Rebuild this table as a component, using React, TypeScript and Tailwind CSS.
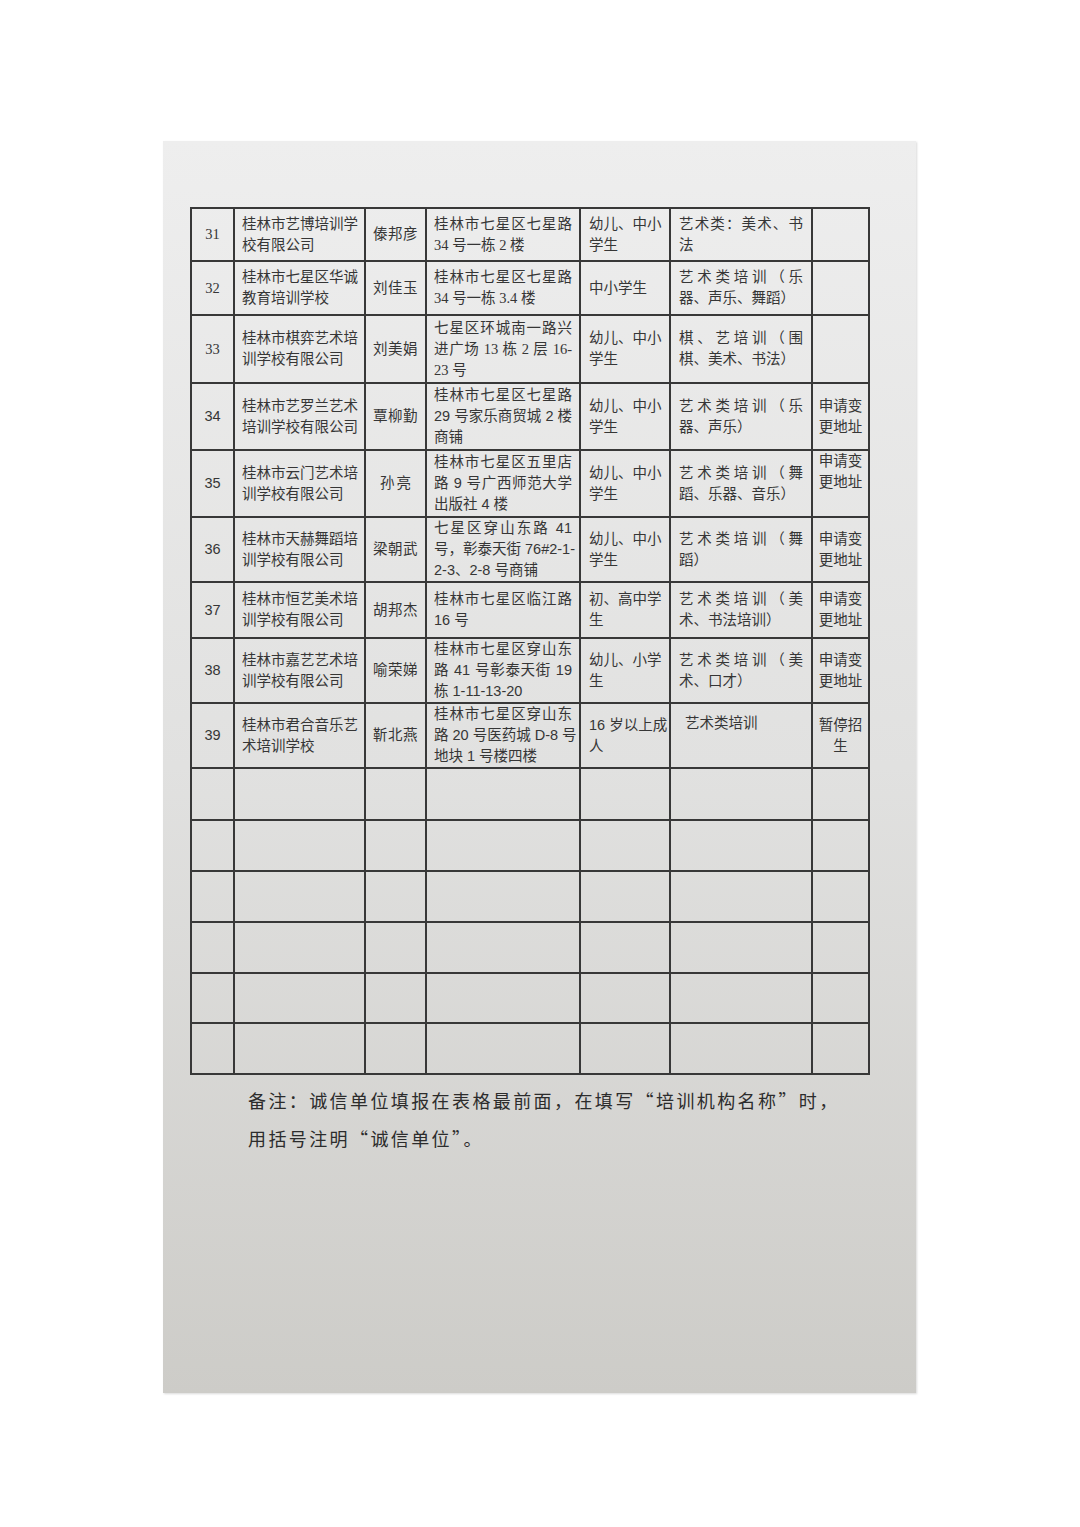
import React from "react";

type Row = {
  n: string;
  name: string[];
  person: string;
  personSpread?: boolean;
  addr: string[];
  obj: string[];
  type: string[];
  note: string[];
  noteTop?: boolean;
  typeTop?: boolean;
  h: string;
  serif?: boolean;
};

const rows: Row[] = [
  { n: "31", name: ["桂林市艺博培训学", "校有限公司"], person: "傣邦彦", addr: ["桂林市七星区七星路", "34 号一栋 2 楼"], obj: ["幼儿、中小", "学生"], type: ["艺术类：美术、书", "法"], note: [], h: "h-[53px]", serif: true },
  { n: "32", name: ["桂林市七星区华诚", "教育培训学校"], person: "刘佳玉", addr: ["桂林市七星区七星路", "34 号一栋 3.4 楼"], obj: ["中小学生"], type: ["艺术类培训（乐", "器、声乐、舞蹈）"], note: [], h: "h-[54px]", serif: true },
  { n: "33", name: ["桂林市棋弈艺术培", "训学校有限公司"], person: "刘美娟", addr: ["七星区环城南一路兴", "进广场 13 栋 2 层 16-", "23 号"], obj: ["幼儿、中小", "学生"], type: ["棋、艺培训（围", "棋、美术、书法）"], note: [], h: "h-[68px]", serif: true },
  { n: "34", name: ["桂林市艺罗兰艺术", "培训学校有限公司"], person: "覃柳勤", addr: ["桂林市七星区七星路", "29 号家乐商贸城 2 楼", "商铺"], obj: ["幼儿、中小", "学生"], type: ["艺术类培训（乐", "器、声乐）"], note: ["申请变", "更地址"], h: "h-[67px]" },
  { n: "35", name: ["桂林市云门艺术培", "训学校有限公司"], person: "孙亮", personSpread: true, addr: ["桂林市七星区五里店", "路 9 号广西师范大学", "出版社 4 楼"], obj: ["幼儿、中小", "学生"], type: ["艺术类培训（舞", "蹈、乐器、音乐）"], note: ["申请变", "更地址"], noteTop: true, h: "h-[67px]" },
  { n: "36", name: ["桂林市天赫舞蹈培", "训学校有限公司"], person: "梁朝武", addr: ["七星区穿山东路 41", "号，彰泰天街 76#2-1-", "2-3、2-8 号商铺"], obj: ["幼儿、中小", "学生"], type: ["艺术类培训（舞", "蹈）"], note: ["申请变", "更地址"], h: "h-[65px]" },
  { n: "37", name: ["桂林市恒艺美术培", "训学校有限公司"], person: "胡邦杰", addr: ["桂林市七星区临江路", "16 号"], obj: ["初、高中学", "生"], type: ["艺术类培训（美", "术、书法培训）"], note: ["申请变", "更地址"], h: "h-[56px]" },
  { n: "38", name: ["桂林市嘉艺艺术培", "训学校有限公司"], person: "喻荣娣", addr: ["桂林市七星区穿山东", "路 41 号彰泰天街 19", "栋 1-11-13-20"], obj: ["幼儿、小学", "生"], type: ["艺术类培训（美", "术、口才）"], note: ["申请变", "更地址"], h: "h-[63px]" },
  { n: "39", name: ["桂林市君合音乐艺", "术培训学校"], person: "靳北燕", addr: ["桂林市七星区穿山东", "路 20 号医药城 D-8 号", "地块 1 号楼四楼"], obj: ["16 岁以上成", "人"], type: ["艺术类培训"], typeTop: true, note: ["暂停招", "生"], h: "h-[65px]" },
];

const emptyHeights = ["h-[52px]", "h-[51px]", "h-[51px]", "h-[51px]", "h-[50px]", "h-[51px]"];

const td = "border-2 border-[#383838] p-0";

function Lines({ lines }: { lines: string[] }) {
  return (
    <>
      {lines.map((l, i) => (
        <div
          key={i}
          className={
            i < lines.length - 1 && lines.length > 1
              ? "text-justify [text-align-last:justify] whitespace-nowrap"
              : "text-left whitespace-nowrap"
          }
        >
          {l}
        </div>
      ))}
    </>
  );
}

export default function App() {
  const sans = "font-['Liberation_Sans','Noto_Sans_CJK_SC',sans-serif]";
  const serif = "font-['Liberation_Serif','Noto_Sans_CJK_SC',serif]";
  return (
    <div lang="zh-CN" className="w-[1080px] h-[1527px] bg-white pt-[141px] pl-[163px] font-['Noto_Sans_CJK_SC',sans-serif]">
      <div className="w-[753px] h-[1252px] bg-linear-to-b from-[#eeeeee] via-[#e1e1e0] to-[#cdccc8] pt-[66px] pl-[27px] shadow-[1px_1px_2px_rgba(0,0,0,0.15)]">
        <table className="table-fixed border-collapse w-[678px] text-[14.5px] leading-[21px] text-[#363636]">
          <colgroup>
            <col className="w-[43px]" />
            <col className="w-[131px]" />
            <col className="w-[61px]" />
            <col className="w-[154px]" />
            <col className="w-[90px]" />
            <col className="w-[142px]" />
            <col className="w-[57px]" />
          </colgroup>
          <tbody>
            {rows.map((r) => (
              <tr key={r.n} className={`${r.h} ${r.serif ? serif : sans}`}>
                <td className={`${td} text-center`}>{r.n}</td>
                <td className={`${td} px-[7px]`}>
                  <Lines lines={r.name} />
                </td>
                <td className={`${td} ${r.personSpread ? "px-[14px]" : "px-[4px] text-center tracking-[0.5px]"}`}>
                  {r.personSpread ? (
                    <div className="flex justify-between">
                      <span>孙</span>
                      <span>亮</span>
                    </div>
                  ) : (
                    r.person
                  )}
                </td>
                <td className={`${td} px-[7px]`}>
                  <Lines lines={r.addr} />
                </td>
                <td className={`${td} px-[8px]`}>
                  <Lines lines={r.obj} />
                </td>
                <td className={`${td} ${r.typeTop ? "align-top pt-[9px] pl-[14px]" : "px-[8px]"}`}>
                  <Lines lines={r.type} />
                </td>
                <td className={`${td} text-center ${r.noteTop ? "align-top" : ""}`}>
                  {r.note.map((l, i) => (
                    <div key={i}>{l}</div>
                  ))}
                </td>
              </tr>
            ))}
            {emptyHeights.map((h, i) => (
              <tr key={i} className={h}>
                <td className={td}></td>
                <td className={td}></td>
                <td className={td}></td>
                <td className={td}></td>
                <td className={td}></td>
                <td className={td}></td>
                <td className={td}></td>
              </tr>
            ))}
          </tbody>
        </table>
        <div className="mt-[6px] pl-[58px] text-[18px] leading-[38px] tracking-[2.4px] text-[#2c2c2c]">
          <div>备注：诚信单位填报在表格最前面，在填写“培训机构名称”时，</div>
          <div>用括号注明“诚信单位”。</div>
        </div>
      </div>
    </div>
  );
}
